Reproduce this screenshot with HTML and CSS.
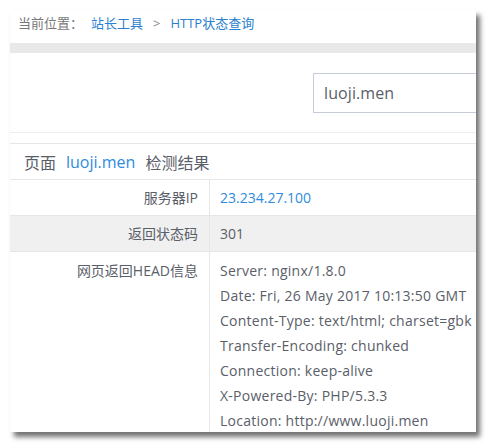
FILE: index.html
```html
<!DOCTYPE html>
<html lang="zh-CN">
<head>
<meta charset="utf-8">
<title>HTTP状态查询</title>
<link rel="stylesheet" href="styles.css">
</head>
<body>
<div class="page">
<div class="panel">
  <div class="crumb">
    <span class="crumb-label">当前位置：</span>
    <a class="crumb-link">站长工具</a>
    <span class="crumb-sep">&gt;</span>
    <a class="crumb-link">HTTP状态查询</a>
  </div>
  <div class="band"></div>
  <div class="search">
    <div class="search-input">luoji.men</div>
  </div>
  <div class="spacer"></div>
  <div class="result-head">
    <span>页面</span><span class="blue">luoji.men</span><span>检测结果</span>
  </div>
  <div class="table">
    <div class="row">
      <div class="label">服务器IP</div>
      <div class="value blue">23.234.27.100</div>
    </div>
    <div class="row alt">
      <div class="label">返回状态码</div>
      <div class="value">301</div>
    </div>
    <div class="row tall">
      <div class="label">网页返回HEAD信息</div>
      <div class="value lines">
        <div>Server: nginx/1.8.0</div>
        <div>Date: Fri, 26 May 2017 10:13:50 GMT</div>
        <div>Content-Type: text/html; charset=gbk</div>
        <div>Transfer-Encoding: chunked</div>
        <div>Connection: keep-alive</div>
        <div>X-Powered-By: PHP/5.3.3</div>
        <div>Location: http://www.luoji.men</div>
      </div>
    </div>
  </div>
</div>
</div>
</body>
</html>
```
FILE: styles.css
```css
html, body {
  margin: 0;
  padding: 0;
  background: #fff;
}
body {
  font-family: "Open Sans", "Noto Sans CJK SC", sans-serif;
  color: #5a5e69;
}
.page {
  width: 487px;
  height: 444px;
  box-sizing: border-box;
  padding: 10px 0 0 10px;
  overflow: hidden;
}
.panel {
  width: 466px;
  height: 422px;
  background: #fff;
  overflow: hidden;
  box-shadow: 4px 5px 5px rgba(0, 0, 0, 0.55);
}
.crumb {
  height: 33px;
  box-sizing: border-box;
  display: flex;
  align-items: flex-start;
  padding: 3px 0 0 8px;
  font-size: 13px;
  line-height: 20px;
  color: #777;
}
.crumb-label { margin-right: 8px; }
.crumb-link { color: #2a7fd0; }
.crumb-sep { margin: 0 10px; color: #888; }
.band {
  height: 10px;
  background: #e9e9e9;
}
.search {
  height: 80px;
  box-sizing: border-box;
  padding: 20px 0 0 303px;
  border-bottom: 1px solid #eeeeee;
}
.search-input {
  width: 300px;
  height: 40px;
  box-sizing: border-box;
  border: 1px solid #c5cbd8;
  padding-left: 10px;
  font-size: 16px;
  letter-spacing: 0.1px;
  line-height: 38px;
  color: #5a5e69;
}
.spacer {
  height: 10px;
  border-bottom: 1px solid #e6e6e6;
}
.result-head {
  height: 35px;
  display: flex;
  align-items: center;
  gap: 10px;
  padding-left: 14px;
  font-size: 16px;
  border-bottom: 1px solid #e6e6e6;
}
.blue { color: #2f8be0; }
.table { font-size: 14px; }
.row {
  display: flex;
  border-bottom: 1px solid #e6e6e6;
}
.row.alt { background: #f0f0f0; }
.label {
  width: 188px;
  flex: none;
  padding-right: 11px;
  text-align: right;
  border-right: 1px solid #e6e6e6;
  line-height: 35px;
}
.value {
  padding-left: 10px;
  line-height: 35px;
  white-space: nowrap;
}
.row.tall {
  border-bottom: none;
}
.row.tall .label,
.row.tall .value {
  line-height: 25px;
  padding-top: 6px;
  height: 174px;
}
.lines div {
  line-height: 25px;
  letter-spacing: 0.25px;
}
```
